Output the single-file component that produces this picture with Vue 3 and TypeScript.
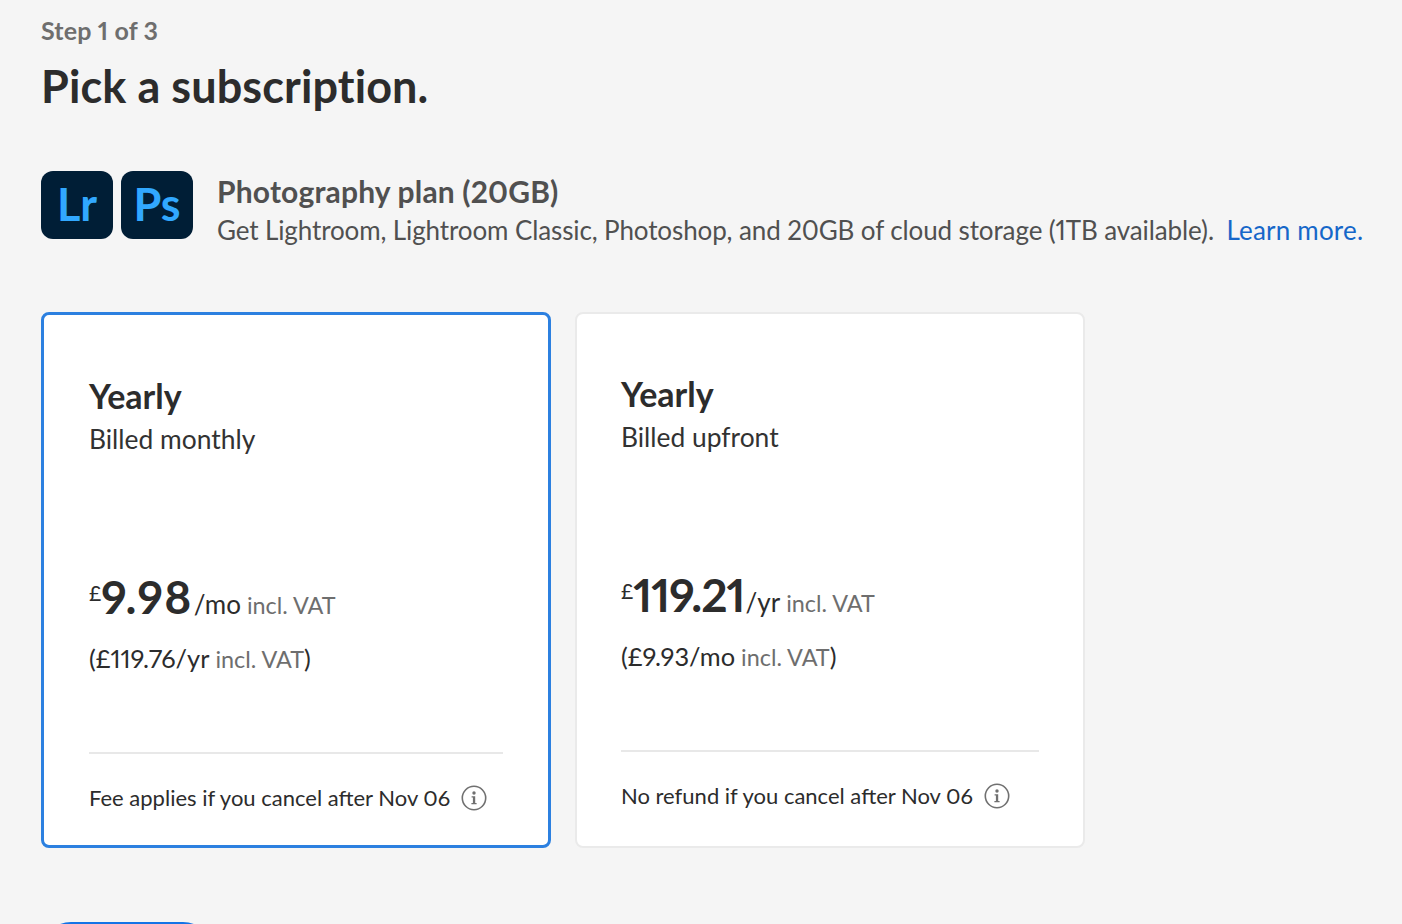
<script setup lang="ts">
interface Plan {
  id: string
  billing: string
  price: string
  unit: string
  alt: string
  altUnit: string
  note: string
  selected: boolean
}

const plans: Plan[] = [
  {
    id: 'monthly',
    billing: 'Billed monthly',
    price: '9.98',
    unit: '/mo',
    alt: '£119.76',
    altUnit: '/yr',
    note: 'Fee applies if you cancel after Nov 06',
    selected: true
  },
  {
    id: 'upfront',
    billing: 'Billed upfront',
    price: '119.21',
    unit: '/yr',
    alt: '£9.93',
    altUnit: '/mo',
    note: 'No refund if you cancel after Nov 06',
    selected: false
  }
]
</script>

<template>
  <main class="page">
    <div class="step">Step 1 of 3</div>
    <h1 class="title">Pick a subscription.</h1>

    <section class="product">
      <div class="logo"><span>Lr</span></div>
      <div class="logo"><span>Ps</span></div>
      <div class="product-text">
        <h2>Photography plan (20GB)</h2>
        <p>
          Get Lightroom, Lightroom Classic, Photoshop, and 20GB of cloud storage (1TB available).
          <a href="#">Learn more.</a>
        </p>
      </div>
    </section>

    <section class="cards">
      <article v-for="plan in plans" :key="plan.id" class="card" :class="{ selected: plan.selected }">
        <h3>Yearly</h3>
        <div class="billing">{{ plan.billing }}</div>
        <div class="price">
          <span class="currency">£</span><span class="amount" :class="plan.id">{{ plan.price }}</span><span class="unit">{{ plan.unit }}</span><span class="vat">incl. VAT</span>
        </div>
        <div class="alt">
          ({{ plan.alt }}{{ plan.altUnit }}<span class="vat">incl. VAT</span>)
        </div>
        <div class="note">
          <span>{{ plan.note }}</span>
          <svg class="info" width="26" height="26" viewBox="0 0 26 26" aria-hidden="true">
            <circle cx="13" cy="13" r="11.7" fill="none" stroke="#707070" stroke-width="1.6" />
            <circle cx="13" cy="8" r="1.7" fill="#707070" />
            <path d="M10.6 11.2h3.6v6.7h1.4v1.4h-5.2v-1.4h1.5v-5.3h-1.3z" fill="#707070" />
          </svg>
        </div>
      </article>
    </section>

    <button class="continue" type="button"></button>
  </main>
</template>

<style>
html,
body {
  margin: 0;
  background: #f5f5f5;
  height: 924px;
  overflow: hidden;
}
</style>

<style scoped>
.page {
  box-sizing: border-box;
  height: 924px;
  overflow: hidden;
  padding: 15px 0 0 41px;
  background: #f5f5f5;
  color: #2c2c2c;
  font-family: Lato, "Noto Sans", sans-serif;
  font-variant-numeric: proportional-nums;
}

.step {
  font-size: 25px;
  line-height: 30px;
  font-weight: 700;
  color: #6e6e6e;
  letter-spacing: 0.16px;
}

.title {
  margin: 11px 0 0;
  font-size: 45px;
  line-height: 60px;
  font-weight: 700;
  letter-spacing: 0.1px;
}

.product {
  display: flex;
  margin-top: 55px;
  height: 68px;
}

.logo {
  flex: none;
  box-sizing: border-box;
  width: 72px;
  height: 68px;
  margin-right: 8px;
  border-radius: 12px;
  background: #001e36;
  color: #31a8ff;
  font-size: 45px;
  line-height: 66px;
  font-weight: 700;
  text-align: center;
}

.product-text {
  margin-left: 16px;
}

.product-text h2 {
  margin: 2px 0 0;
  font-size: 30px;
  line-height: 36px;
  font-weight: 700;
  letter-spacing: 0.17px;
  color: #505050;
}

.product-text p {
  margin: 4px 0 0;
  font-size: 26px;
  line-height: 34px;
  letter-spacing: -0.115px;
  color: #505050;
  white-space: nowrap;
}

.product-text a {
  margin-left: 6px;
  color: #1667c9;
  letter-spacing: 0.2px;
  text-decoration: none;
}

.cards {
  display: flex;
  gap: 24px;
  margin-top: 73px;
}

.card {
  box-sizing: border-box;
  display: flex;
  flex-direction: column;
  width: 510px;
  height: 536px;
  padding: 60px 44px 0;
  border: 2px solid #eaeaea;
  border-radius: 8px;
  background: #fff;
}

.card.selected {
  padding: 61px 45px 0;
  border: 3px solid #2c80e0;
}

.card h3 {
  margin: 0;
  font-size: 34px;
  line-height: 40px;
  font-weight: 700;
}

.billing {
  margin-top: 6px;
  font-size: 26.4px;
  line-height: 34px;
  color: #323232;
}

.price {
  margin-top: 112px;
  height: 58px;
  line-height: 58px;
  white-space: nowrap;
}

.currency {
  position: relative;
  top: -13px;
  font-size: 21px;
}

.amount {
  font-size: 46px;
  font-weight: 700;
  letter-spacing: 1.3px;
}

.amount.upfront {
  letter-spacing: -1px;
}

.unit {
  margin-left: 1px;
  font-size: 26px;
}

.vat {
  margin-left: 6px;
  font-size: 23.4px;
  color: #6e6e6e;
}

.alt {
  margin-top: 15px;
  height: 34px;
  font-size: 25.4px;
  line-height: 34px;
  white-space: nowrap;
}

.note {
  display: flex;
  align-items: center;
  gap: 11px;
  margin-top: 77px;
  padding-top: 29px;
  height: 29px;
  border-top: 2px solid #e8e8e8;
  font-size: 22px;
  white-space: nowrap;
}

.continue {
  display: block;
  width: 172px;
  height: 60px;
  margin: 74px 0 0;
  padding: 0;
  border: 0;
  border-radius: 30px;
  background: #1473e6;
}
</style>
